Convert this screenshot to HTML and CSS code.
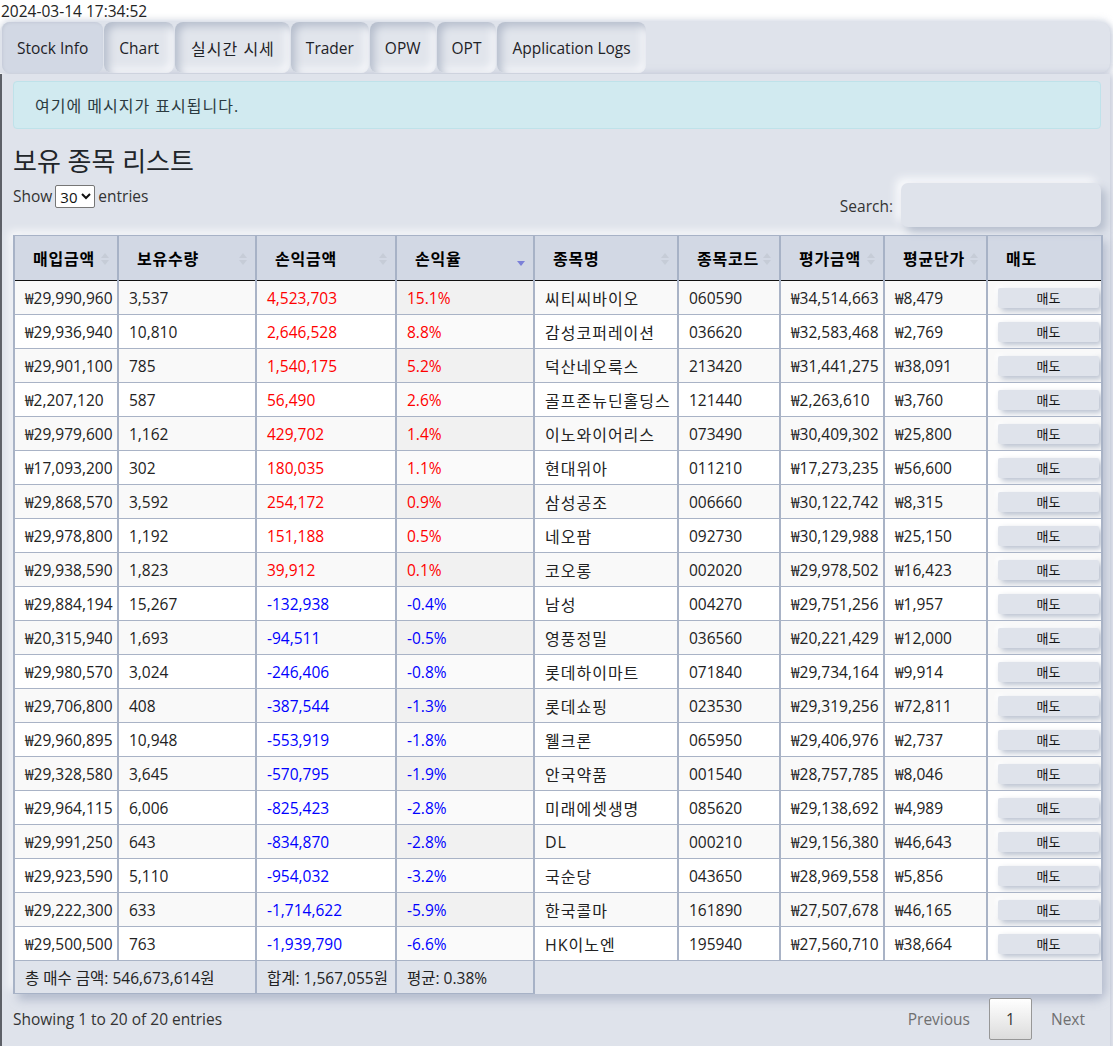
FILE: index.html
```html
<!DOCTYPE html>
<html lang="ko">
<head>
<meta charset="utf-8">
<title>Stock Info</title>
<link rel="stylesheet" href="styles.css">
</head>
<body>
<div class="clock">2024-03-14 17:34:52</div>
<div class="tabs-wrap">
  <div class="tabbar">
    <div class="tab active">Stock Info</div>
    <div class="tab">Chart</div>
    <div class="tab ko">실시간 시세</div>
    <div class="tab">Trader</div>
    <div class="tab">OPW</div>
    <div class="tab">OPT</div>
    <div class="tab">Application Logs</div>
  </div>
  <div class="panel">
    <div class="alert"><span class="ko">여기에 메시지가 표시됩니다.</span></div>
    <h3 class="title">보유 종목 리스트</h3>
    <div class="dt-top">
      <div class="length">Show <select class="len-select"><option>30</option></select> entries</div>
      <div class="filter"><span class="filter-label">Search:</span><input class="search" type="text"></div>
    </div>
    <div class="table-card">
      <table class="dt">
        <colgroup>
          <col class="c1"><col class="c2"><col class="c3"><col class="c4"><col class="c5"><col class="c6"><col class="c7"><col class="c8"><col class="c9">
        </colgroup>
        <thead>
          <tr>
            <th><div class="th-in"><span>매입금액</span><svg class="sort" viewBox="0 0 8 14"><polygon points="0,6 4,1 8,6"/><polygon points="0,8 4,13 8,8"/></svg></div></th>
            <th><div class="th-in"><span>보유수량</span><svg class="sort" viewBox="0 0 8 14"><polygon points="0,6 4,1 8,6"/><polygon points="0,8 4,13 8,8"/></svg></div></th>
            <th><div class="th-in"><span>손익금액</span><svg class="sort" viewBox="0 0 8 14"><polygon points="0,6 4,1 8,6"/><polygon points="0,8 4,13 8,8"/></svg></div></th>
            <th><div class="th-in"><span>손익율</span><svg class="sort active" viewBox="0 0 8 14"><polygon points="0,7 4,12 8,7"/></svg></div></th>
            <th><div class="th-in"><span>종목명</span><svg class="sort" viewBox="0 0 8 14"><polygon points="0,6 4,1 8,6"/><polygon points="0,8 4,13 8,8"/></svg></div></th>
            <th><div class="th-in"><span>종목코드</span><svg class="sort" viewBox="0 0 8 14"><polygon points="0,6 4,1 8,6"/><polygon points="0,8 4,13 8,8"/></svg></div></th>
            <th><div class="th-in"><span>평가금액</span><svg class="sort" viewBox="0 0 8 14"><polygon points="0,6 4,1 8,6"/><polygon points="0,8 4,13 8,8"/></svg></div></th>
            <th><div class="th-in"><span>평균단가</span><svg class="sort" viewBox="0 0 8 14"><polygon points="0,6 4,1 8,6"/><polygon points="0,8 4,13 8,8"/></svg></div></th>
            <th><div class="th-in"><span>매도</span></div></th>
          </tr>
        </thead>
        <tbody>
          <tr><td>₩29,990,960</td><td>3,537</td><td class="pos">4,523,703</td><td class="pos sorted">15.1%</td><td class="name">씨티씨바이오</td><td>060590</td><td>₩34,514,663</td><td>₩8,479</td><td><button class="sell">매도</button></td></tr>
          <tr><td>₩29,936,940</td><td>10,810</td><td class="pos">2,646,528</td><td class="pos sorted">8.8%</td><td class="name">감성코퍼레이션</td><td>036620</td><td>₩32,583,468</td><td>₩2,769</td><td><button class="sell">매도</button></td></tr>
          <tr><td>₩29,901,100</td><td>785</td><td class="pos">1,540,175</td><td class="pos sorted">5.2%</td><td class="name">덕산네오룩스</td><td>213420</td><td>₩31,441,275</td><td>₩38,091</td><td><button class="sell">매도</button></td></tr>
          <tr><td>₩2,207,120</td><td>587</td><td class="pos">56,490</td><td class="pos sorted">2.6%</td><td class="name">골프존뉴딘홀딩스</td><td>121440</td><td>₩2,263,610</td><td>₩3,760</td><td><button class="sell">매도</button></td></tr>
          <tr><td>₩29,979,600</td><td>1,162</td><td class="pos">429,702</td><td class="pos sorted">1.4%</td><td class="name">이노와이어리스</td><td>073490</td><td>₩30,409,302</td><td>₩25,800</td><td><button class="sell">매도</button></td></tr>
          <tr><td>₩17,093,200</td><td>302</td><td class="pos">180,035</td><td class="pos sorted">1.1%</td><td class="name">현대위아</td><td>011210</td><td>₩17,273,235</td><td>₩56,600</td><td><button class="sell">매도</button></td></tr>
          <tr><td>₩29,868,570</td><td>3,592</td><td class="pos">254,172</td><td class="pos sorted">0.9%</td><td class="name">삼성공조</td><td>006660</td><td>₩30,122,742</td><td>₩8,315</td><td><button class="sell">매도</button></td></tr>
          <tr><td>₩29,978,800</td><td>1,192</td><td class="pos">151,188</td><td class="pos sorted">0.5%</td><td class="name">네오팜</td><td>092730</td><td>₩30,129,988</td><td>₩25,150</td><td><button class="sell">매도</button></td></tr>
          <tr><td>₩29,938,590</td><td>1,823</td><td class="pos">39,912</td><td class="pos sorted">0.1%</td><td class="name">코오롱</td><td>002020</td><td>₩29,978,502</td><td>₩16,423</td><td><button class="sell">매도</button></td></tr>
          <tr><td>₩29,884,194</td><td>15,267</td><td class="neg">-132,938</td><td class="neg sorted">-0.4%</td><td class="name">남성</td><td>004270</td><td>₩29,751,256</td><td>₩1,957</td><td><button class="sell">매도</button></td></tr>
          <tr><td>₩20,315,940</td><td>1,693</td><td class="neg">-94,511</td><td class="neg sorted">-0.5%</td><td class="name">영풍정밀</td><td>036560</td><td>₩20,221,429</td><td>₩12,000</td><td><button class="sell">매도</button></td></tr>
          <tr><td>₩29,980,570</td><td>3,024</td><td class="neg">-246,406</td><td class="neg sorted">-0.8%</td><td class="name">롯데하이마트</td><td>071840</td><td>₩29,734,164</td><td>₩9,914</td><td><button class="sell">매도</button></td></tr>
          <tr><td>₩29,706,800</td><td>408</td><td class="neg">-387,544</td><td class="neg sorted">-1.3%</td><td class="name">롯데쇼핑</td><td>023530</td><td>₩29,319,256</td><td>₩72,811</td><td><button class="sell">매도</button></td></tr>
          <tr><td>₩29,960,895</td><td>10,948</td><td class="neg">-553,919</td><td class="neg sorted">-1.8%</td><td class="name">웰크론</td><td>065950</td><td>₩29,406,976</td><td>₩2,737</td><td><button class="sell">매도</button></td></tr>
          <tr><td>₩29,328,580</td><td>3,645</td><td class="neg">-570,795</td><td class="neg sorted">-1.9%</td><td class="name">안국약품</td><td>001540</td><td>₩28,757,785</td><td>₩8,046</td><td><button class="sell">매도</button></td></tr>
          <tr><td>₩29,964,115</td><td>6,006</td><td class="neg">-825,423</td><td class="neg sorted">-2.8%</td><td class="name">미래에셋생명</td><td>085620</td><td>₩29,138,692</td><td>₩4,989</td><td><button class="sell">매도</button></td></tr>
          <tr><td>₩29,991,250</td><td>643</td><td class="neg">-834,870</td><td class="neg sorted">-2.8%</td><td class="name">DL</td><td>000210</td><td>₩29,156,380</td><td>₩46,643</td><td><button class="sell">매도</button></td></tr>
          <tr><td>₩29,923,590</td><td>5,110</td><td class="neg">-954,032</td><td class="neg sorted">-3.2%</td><td class="name">국순당</td><td>043650</td><td>₩28,969,558</td><td>₩5,856</td><td><button class="sell">매도</button></td></tr>
          <tr><td>₩29,222,300</td><td>633</td><td class="neg">-1,714,622</td><td class="neg sorted">-5.9%</td><td class="name">한국콜마</td><td>161890</td><td>₩27,507,678</td><td>₩46,165</td><td><button class="sell">매도</button></td></tr>
          <tr><td>₩29,500,500</td><td>763</td><td class="neg">-1,939,790</td><td class="neg sorted">-6.6%</td><td class="name">HK이노엔</td><td>195940</td><td>₩27,560,710</td><td>₩38,664</td><td><button class="sell">매도</button></td></tr>
        </tbody>
        <tfoot>
          <tr>
            <th colspan="2" class="ft">총 매수 금액: 546,673,614원</th>
            <th class="ft">합계: 1,567,055원</th>
            <th class="ft">평균: 0.38%</th>
            <th colspan="5" class="ft-empty"></th>
          </tr>
        </tfoot>
      </table>
    </div>
    <div class="dt-bottom">
      <div class="info">Showing 1 to 20 of 20 entries</div>
      <div class="paginate">
        <span class="pg disabled">Previous</span>
        <span class="pg current">1</span>
        <span class="pg disabled">Next</span>
      </div>
    </div>
  </div>
</div>
</body>
</html>
```

FILE: styles.css
```css
* { box-sizing: border-box; }

body {
  margin: 0;
  background: #ffffff;
  color: #212529;
  font-family: "Open Sans", "Noto Sans CJK KR", sans-serif;
  font-size: 15.5px;
  overflow: hidden;
}

.ko {
  font-size: 16px;
  letter-spacing: 1px;
}

.clock {
  height: 22px;
  line-height: 22px;
  padding-left: 1px;
  color: #222;
}

.tabs-wrap {
  width: 1110px;
}

.tabbar {
  display: flex;
  height: 51px;
  padding-left: 2px;
  background: #dfe3eb;
  border-radius: 10px 10px 10px 0;
  box-shadow: 0 -3px 6px rgba(170, 180, 200, 0.35), 3px 2px 6px rgba(160, 170, 195, 0.45);
}

.tab {
  display: flex;
  align-items: center;
  padding: 0 15px;
  margin-right: 1px;
  border-radius: 8px;
  color: #1e2227;
  background: #e1e5ec;
  box-shadow: inset 4px 4px 8px #b4bccb, inset -4px -4px 8px #f7f8fb;
}

.tab.ko {
  padding: 0 15px 0 16px;
}

.tab.active {
  background: #d2d8e4;
  box-shadow: inset 1px 1px 3px #c4cad7;
}

.panel {
  margin-top: 1px;
  height: 980px;
  background: #dfe3eb;
  border-left: 2px solid #5d6067;
  padding: 7px 9px 0 11px;
  box-shadow: 4px 0 7px rgba(150, 160, 185, 0.5);
}

.alert {
  height: 48px;
  padding: 0 21px;
  display: flex;
  align-items: center;
  background: #d1eaf0;
  border: 1px solid #bfe2ea;
  border-radius: 4px;
  color: #2c3b41;
}

.title {
  margin: 16px 0 8px;
  font-size: 26px;
  line-height: 32px;
  font-weight: 400;
  color: #212529;
}

.dt-top {
  display: flex;
  justify-content: space-between;
  align-items: flex-start;
  margin-top: -2px;
}

.length {
  display: flex;
  align-items: center;
  gap: 3px;
  height: 24px;
  margin-top: 1px;
  color: #333;
}

.len-select {
  height: 23px;
  font-family: inherit;
  font-size: 15px;
  padding: 0;
  border: 1px solid #767676;
  border-radius: 2px;
  background: #fff;
  color: #111;
}

.filter {
  display: flex;
  align-items: center;
  gap: 8px;
  color: #333;
}

.filter-label {
  margin-top: 2px;
}

.search {
  width: 200px;
  height: 44px;
  border: none;
  border-radius: 7px;
  background: #dfe3eb;
  box-shadow: 5px 5px 9px #b6becd, -5px -5px 9px #f9fafc;
  outline: none;
}

.table-card {
  margin-top: 8px;
  background: #dfe3eb;
  border-radius: 0 0 10px 0;
  box-shadow: 5px 6px 10px rgba(150, 160, 185, 0.6), -4px -4px 8px rgba(255, 255, 255, 0.8);
}

.dt {
  width: 100%;
  border-collapse: collapse;
  table-layout: fixed;
}

.c1 { width: 104px; }
.c2 { width: 138px; }
.c3 { width: 140px; }
.c4 { width: 138px; }
.c5 { width: 144px; }
.c6 { width: 102px; }
.c7 { width: 104px; }
.c8 { width: 103px; }
.c9 { width: 115px; }

.dt thead th {
  height: 45px;
  padding: 0 8px 0 18px;
  background: #d2d8e4;
  border: 1px solid #a7b2c6;
  border-left-width: 2px;
  border-right-width: 2px;
  border-bottom: 1px solid #111;
  font-weight: 700;
  text-align: left;
  color: #000;
}

.th-in {
  display: flex;
  align-items: center;
  justify-content: space-between;
  white-space: nowrap;
}

.th-in span {
  font-size: 16px;
  letter-spacing: 0.8px;
}

.sort {
  width: 8px;
  height: 14px;
  fill: #c6ccd7;
  flex: none;
  margin-top: 2px;
}

.sort.active {
  fill: #7b80d8;
  margin-top: 6px;
}

.dt td {
  height: 34px;
  padding: 0 4px 0 10px;
  border: 1px solid #a9b3c6;
  border-left-width: 2px;
  border-right-width: 2px;
  white-space: nowrap;
  overflow: hidden;
  color: #222;
}

.dt td.name {
  font-size: 16px;
  letter-spacing: 1px;
}

.dt tbody tr:nth-child(odd) td { background: #f9f9f9; }
.dt tbody tr:nth-child(even) td { background: #ffffff; }
.dt tbody tr:nth-child(odd) td.sorted { background: #f1f1f1; }
.dt tbody tr:nth-child(even) td.sorted { background: #fafafa; }

.dt td.pos { color: #ff0000; }
.dt td.neg { color: #0000ff; }

.sell {
  display: block;
  width: 101px;
  height: 20px;
  padding: 0;
  border: none;
  background: #dfe3eb;
  border-radius: 2px;
  box-shadow: 3px 3px 6px #b7bfce, -2px -2px 4px #ffffff;
  font-family: inherit;
  font-size: 13px;
  color: #111;
}

.dt tfoot th {
  height: 33px;
  padding: 0 10px;
  background: #dfe3eb;
  font-weight: 400;
  text-align: left;
  white-space: nowrap;
  color: #222;
}

.dt tfoot th.ft {
  border: 1px solid #a7b2c6;
  border-left-width: 2px;
  border-right-width: 2px;
  border-top: 1px solid #111;
}

.dt tfoot th.ft-empty {
  border: none;
  border-left: 2px solid #a7b2c6;
}

.dt-bottom {
  display: flex;
  justify-content: space-between;
  align-items: center;
  margin-top: 4px;
  height: 42px;
}

.info {
  color: #333;
}

.paginate {
  display: flex;
  align-items: center;
  margin-right: -3px;
}

.pg {
  padding: 0 19px;
  height: 42px;
  display: flex;
  align-items: center;
}

.pg.disabled {
  color: #707070;
}

.pg.current {
  width: 43px;
  justify-content: center;
  padding: 0;
  border: 1px solid #979797;
  border-radius: 2px;
  background: linear-gradient(to bottom, #ffffff 0%, #dcdcdc 100%);
  color: #333;
}
```
